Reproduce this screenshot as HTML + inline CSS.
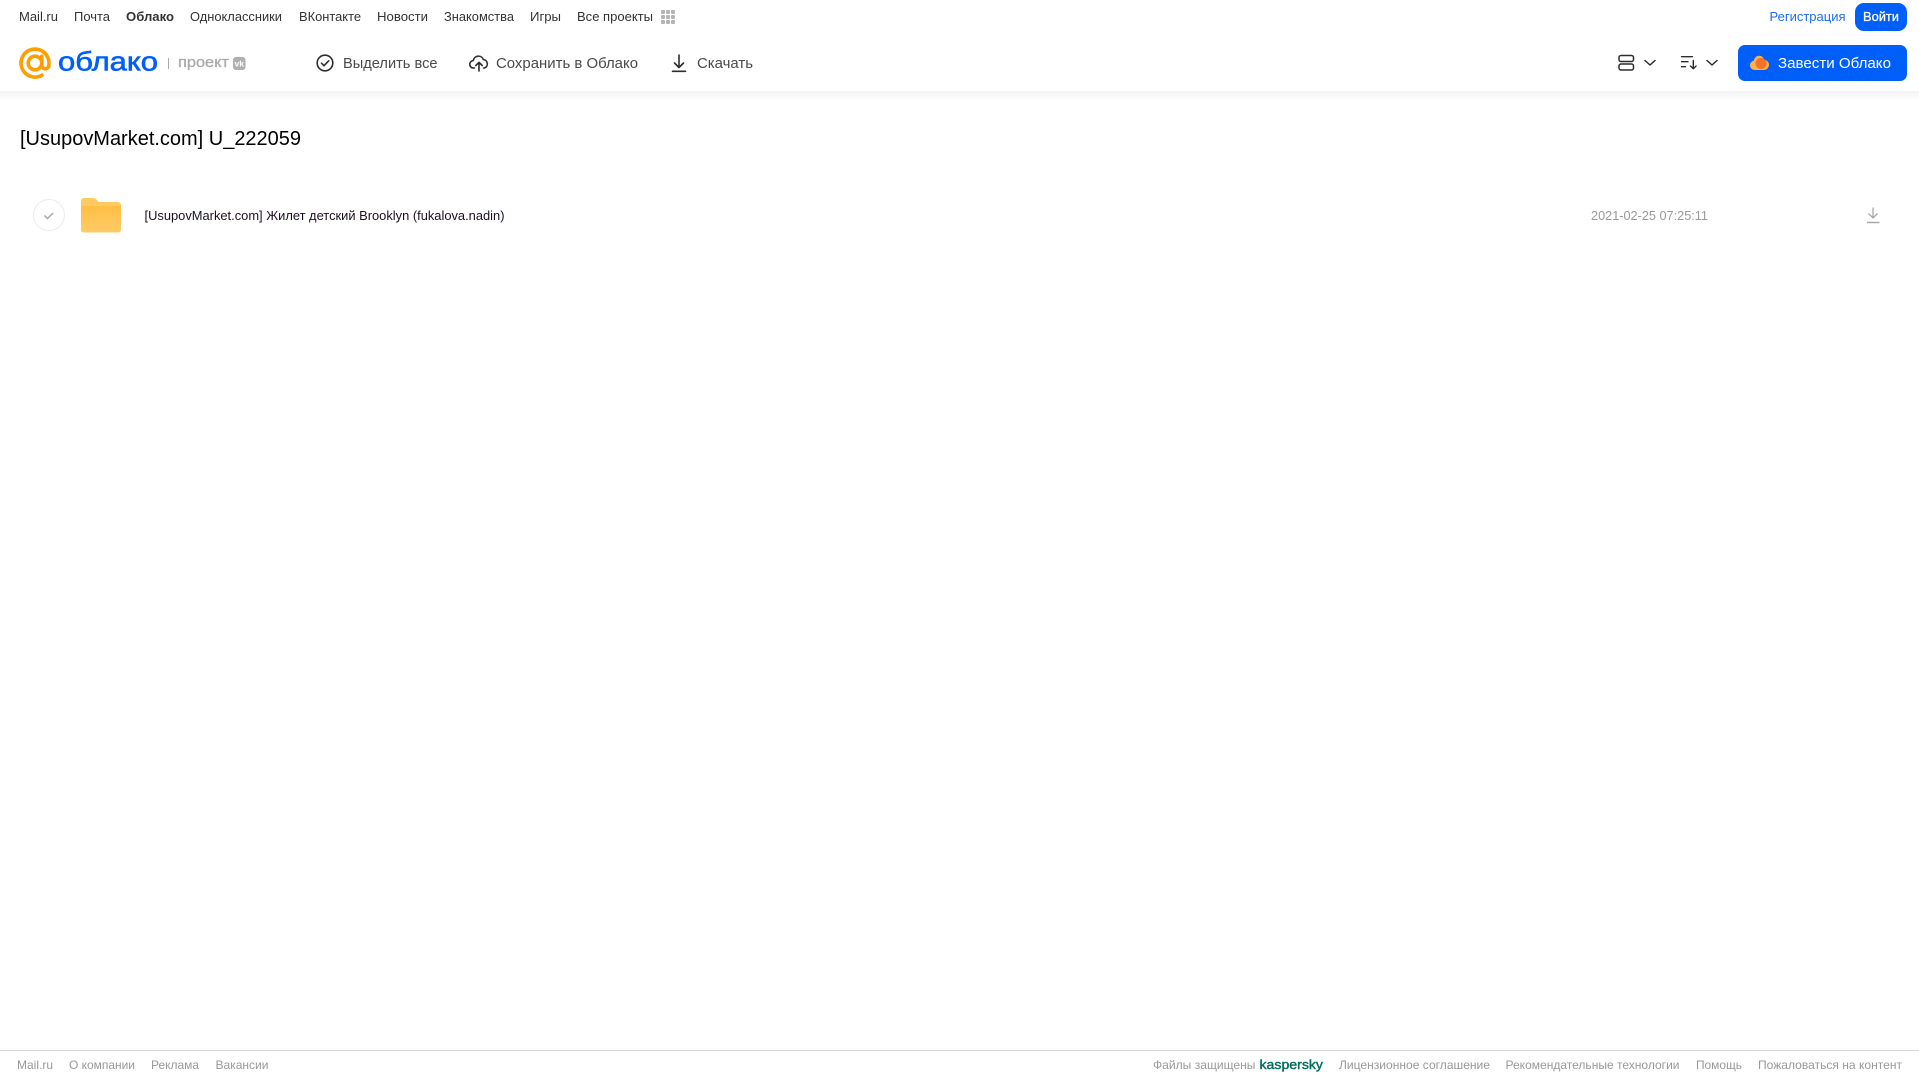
<!DOCTYPE html>
<html lang="ru">
<head>
<meta charset="utf-8">
<title>[UsupovMarket.com] U_222059</title>
<style>
html,body{margin:0;padding:0;background:#fff;width:1919px;height:1079px;overflow:hidden}
svg{display:block}
text{font-family:"Liberation Sans","DejaVu Sans",sans-serif}
.n{font-size:13px;fill:#333}
.t{font-size:14.5px;fill:#4a4a4a}
.f{font-size:12px;fill:#999}
</style>
</head>
<body>
<svg width="1919" height="1079" viewBox="0 0 1919 1079" xmlns="http://www.w3.org/2000/svg">
<defs>
<linearGradient id="sh" x1="0" y1="0" x2="0" y2="1"><stop offset="0" stop-color="#f3f3f3"/><stop offset="1" stop-color="#fff"/></linearGradient>
<linearGradient id="fb" x1="0" y1="0" x2="0" y2="1"><stop offset="0" stop-color="#ffbf45"/><stop offset="1" stop-color="#ffcb66"/></linearGradient>
</defs>
<rect width="1919" height="1079" fill="#fff"/>
<rect y="91" width="1919" height="10" fill="url(#sh)"/>

<!-- top nav -->
<g class="nav">
<text class="n" x="19" y="21" textLength="39" lengthAdjust="spacingAndGlyphs">Mail.ru</text>
<text class="n" x="74" y="21" textLength="36" lengthAdjust="spacingAndGlyphs">Почта</text>
<text class="n" x="126" y="21" textLength="48" lengthAdjust="spacingAndGlyphs" font-weight="700">Облако</text>
<text class="n" x="190" y="21" textLength="92" lengthAdjust="spacingAndGlyphs">Одноклассники</text>
<text class="n" x="299" y="21" textLength="62" lengthAdjust="spacingAndGlyphs">ВКонтакте</text>
<text class="n" x="377" y="21" textLength="51" lengthAdjust="spacingAndGlyphs">Новости</text>
<text class="n" x="444" y="21" textLength="70" lengthAdjust="spacingAndGlyphs">Знакомства</text>
<text class="n" x="530" y="21" textLength="31" lengthAdjust="spacingAndGlyphs">Игры</text>
<text class="n" x="577" y="21" textLength="76" lengthAdjust="spacingAndGlyphs">Все проекты</text>
<g fill="#b4b4b4">
<rect x="661" y="10" width="4" height="4" rx="1"/><rect x="666" y="10" width="4" height="4" rx="1"/><rect x="671" y="10" width="4" height="4" rx="1"/>
<rect x="661" y="15" width="4" height="4" rx="1"/><rect x="666" y="15" width="4" height="4" rx="1"/><rect x="671" y="15" width="4" height="4" rx="1"/>
<rect x="661" y="20" width="4" height="4" rx="1"/><rect x="666" y="20" width="4" height="4" rx="1"/><rect x="671" y="20" width="4" height="4" rx="1"/>
</g>
<text x="1769.500" y="21" font-size="13" fill="#1a6ef5" textLength="76" lengthAdjust="spacingAndGlyphs">Регистрация</text>
<rect x="1855" y="3" width="52" height="28" rx="9" fill="#005ff9"/>
<text x="1863" y="21" font-size="13" fill="#fff" stroke="#fff" stroke-width=".3" textLength="36" lengthAdjust="spacingAndGlyphs">Войти</text>
</g>

<!-- logo -->
<g fill="none" stroke="#ff9e00" stroke-width="3.600">
<circle cx="35" cy="63" r="6.800"/>
<path d="M41.800 56.200V65.500a3.600 3.600 0 0 0 6.800 1.300c.3-1.200.4-2.600.4-3.800A14 14 0 1 0 42 75.200" stroke-linecap="round"/>
</g>
<text x="58" y="70.500" font-size="27" fill="#005ff9" stroke="#005ff9" stroke-width=".6" textLength="100" lengthAdjust="spacingAndGlyphs">облако</text>
<rect x="168" y="58" width="1" height="11" fill="#aaa"/>
<text x="178" y="67" font-size="14.500" fill="#aaa" stroke="#aaa" stroke-width=".3" textLength="51" lengthAdjust="spacingAndGlyphs">проект</text>
<rect x="233" y="57" width="12.500" height="13" rx="3" fill="#b0b0b0"/>
<text x="234.500" y="66.500" font-size="8" font-weight="700" fill="#fff" textLength="9.500" lengthAdjust="spacingAndGlyphs">vk</text>

<!-- toolbar -->
<g fill="none" stroke="#2c2d2e" stroke-width="1.600" stroke-linecap="round" stroke-linejoin="round">
<circle cx="325" cy="63" r="7.800"/>
<path d="M321.500 63.200l2.500 2.500 4.700-4.900"/>
<path d="M474.500 68h-.8a3.700 3.700 0 0 1-.5-7.400 5.300 5.300 0 0 1 10.200-1 4.300 4.300 0 0 1 .9 8.400h-.8"/>
<path d="M479 71V62.500M475.800 65.500l3.200-3.200 3.200 3.200"/>
<path d="M679 55v12.500M674.500 63l4.500 4.500 4.500-4.500M672.500 71.300h13"/>
</g>
<text class="t" x="343" y="68" textLength="94.500" lengthAdjust="spacingAndGlyphs">Выделить все</text>
<text class="t" x="496" y="68" textLength="142" lengthAdjust="spacingAndGlyphs">Сохранить в Облако</text>
<text class="t" x="697" y="68" textLength="56" lengthAdjust="spacingAndGlyphs">Скачать</text>

<!-- view / sort -->
<g fill="none" stroke="#2c2d2e" stroke-width="1.500" stroke-linecap="round" stroke-linejoin="round">
<rect x="1619" y="55.500" width="14.500" height="6" rx="2"/>
<rect x="1619" y="64" width="14.500" height="6" rx="2"/>
<path d="M1645 60.500l5 4.500 5-4.500"/>
<path d="M1707 60.500l5 4.500 5-4.500"/>
<path d="M1681.500 56.700h11M1681.500 61.700h6.500M1681.500 66.700h4" stroke-width="1.300"/>
<path d="M1693.300 60.500v8M1690.500 66l2.800 2.800 2.800-2.800" stroke-width="1.400"/>
</g>

<!-- CTA -->
<rect x="1738" y="45" width="169" height="36" rx="7" fill="#005ff9"/>
<path d="M1755 70c-3 0-5-2-5-4.700 0-2.400 1.700-4.200 3.800-4.600.6-3 2.700-5 5.200-5 2.600 0 4.500 1.700 5.100 4 2.700.2 4.900 2.400 4.900 5.100 0 2.900-2.300 5.200-5 5.200z" fill="#ffb23f"/>
<circle cx="1761" cy="63.500" r="5.500" fill="#f4702b"/>
<text x="1778" y="68" font-size="14.500" fill="#fff" textLength="113" lengthAdjust="spacingAndGlyphs">Завести Облако</text>

<!-- title -->
<text x="20" y="145" font-size="20" fill="#000" textLength="281" lengthAdjust="spacingAndGlyphs">[UsupovMarket.com] U_222059</text>

<!-- row -->
<circle cx="49" cy="215" r="15.500" fill="#fff" stroke="#ececec"/>
<path d="M44.500 215.500l3 3 5.500-5.500" fill="none" stroke="#a5a5a5" stroke-width="1.500"/>
<path d="M81 201a3 3 0 0 1 3-3h9c2 0 3 .8 4 2l1.800 2H118a3 3 0 0 1 3 3v5H81z" fill="#ffca60"/>
<path d="M81 206h40v24a2.500 2.500 0 0 1-2.500 2.500h-35A2.500 2.500 0 0 1 81 230z" fill="url(#fb)"/>
<text x="144.500" y="220" font-size="13" fill="#1e0f23" textLength="360" lengthAdjust="spacingAndGlyphs">[UsupovMarket.com] Жилет детский Brooklyn (fukalova.nadin)</text>
<text x="1591" y="220" font-size="12.500" fill="#999" textLength="117" lengthAdjust="spacingAndGlyphs">2021-02-25 07:25:11</text>
<g fill="none" stroke="#a8a8a8" stroke-width="1.300">
<path d="M1873 207.500v10.500M1868.500 213.500l4.500 4.500 4.500-4.500"/>
<path d="M1867 222.500h12.500" stroke-width="1.500"/>
</g>

<!-- footer -->
<rect y="1050" width="1919" height="1" fill="#d9d9d9"/>
<text class="f" x="17" y="1069" textLength="36" lengthAdjust="spacingAndGlyphs">Mail.ru</text>
<text class="f" x="69" y="1069" textLength="66" lengthAdjust="spacingAndGlyphs">О компании</text>
<text class="f" x="151" y="1069" textLength="48" lengthAdjust="spacingAndGlyphs">Реклама</text>
<text class="f" x="215.500" y="1069" textLength="53" lengthAdjust="spacingAndGlyphs">Вакансии</text>
<text class="f" x="1153" y="1069" textLength="102.500" lengthAdjust="spacingAndGlyphs">Файлы защищены</text>
<text x="1259.500" y="1069" font-size="13" fill="#006d5c" stroke="#006d5c" stroke-width=".4" textLength="63.500" lengthAdjust="spacingAndGlyphs">kaspersky</text>
<text class="f" x="1339" y="1069" textLength="151" lengthAdjust="spacingAndGlyphs">Лицензионное соглашение</text>
<text class="f" x="1505.500" y="1069" textLength="174" lengthAdjust="spacingAndGlyphs">Рекомендательные технологии</text>
<text class="f" x="1696" y="1069" textLength="46" lengthAdjust="spacingAndGlyphs">Помощь</text>
<text class="f" x="1758" y="1069" textLength="144" lengthAdjust="spacingAndGlyphs">Пожаловаться на контент</text>
</svg>
</body>
</html>
